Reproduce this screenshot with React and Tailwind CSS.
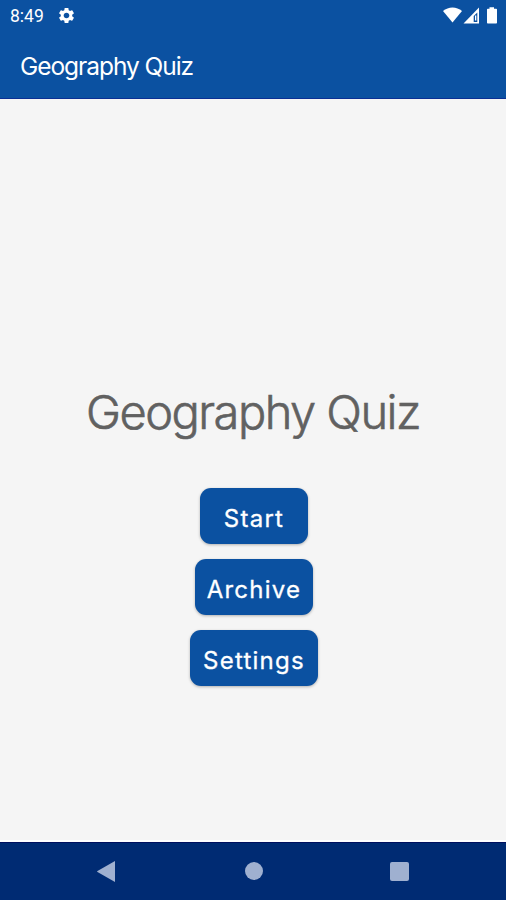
const menuItems = [
  { label: 'Start', width: 'w-[108px]' },
  { label: 'Archive', width: 'w-[118px]' },
  { label: 'Settings', width: 'w-[128px]' },
]

function StatusBar() {
  return (
    <div className="flex h-8 items-center justify-between pl-[10px] pr-[8px] text-white">
      <div className="flex items-center gap-[13px]">
        <span className="pt-[2px] font-['Roboto',sans-serif] text-[17.5px] leading-none">8:49</span>
        <svg className="-mt-px h-[19px] w-[19px]" viewBox="0 0 24 24" fill="currentColor">
          <path d="M19.14 12.94c.04-.3.06-.61.06-.94 0-.32-.02-.64-.07-.94l2.03-1.58c.18-.14.23-.41.12-.61l-1.92-3.32c-.12-.22-.37-.29-.59-.22l-2.39.96c-.5-.38-1.03-.7-1.62-.94l-.36-2.54c-.04-.24-.24-.41-.48-.41h-3.84c-.24 0-.43.17-.47.41l-.36 2.54c-.59.24-1.13.57-1.62.94l-2.39-.96c-.22-.08-.47 0-.59.22L2.74 8.87c-.12.21-.08.47.12.61l2.03 1.58c-.05.3-.09.63-.09.94s.02.64.07.94l-2.03 1.58c-.18.14-.23.41-.12.61l1.92 3.32c.12.22.37.29.59.22l2.39-.96c.5.38 1.03.7 1.62.94l.36 2.54c.05.24.24.41.48.41h3.84c.24 0 .44-.17.47-.41l.36-2.54c.59-.24 1.13-.56 1.62-.94l2.39.96c.22.08.47 0 .59-.22l1.92-3.32c.12-.22.07-.47-.12-.61l-2.01-1.58zM12 15.6c-1.98 0-3.6-1.62-3.6-3.6s1.62-3.6 3.6-3.6 3.6 1.62 3.6 3.6-1.62 3.6-3.6 3.6z" />
        </svg>
      </div>
      {/* Wifi, signal and battery */}
      <svg className="-mt-[2px] h-[17px] w-[55px]" viewBox="0 0 55 17" fill="currentColor">
        <path d="M0 4C5.4-.8 13.6-.8 19 4L9.500 15.500Z" />
        <path d="M36 .5v16H20.500Z" />
        <path d="M34.300 5.500v9.500h-3.600V9Z" fill="#0b51a1" />
        <path d="M32 8.500h1.300v5H32Z" />
        <path d="M46.500 .3h4.500v1.500h2.200q.8 0 .8.800V15.700q0 .8-.8.800h-8.400q-.8 0-.8-.8V2.600q0-.8.800-.8h1.700Z" />
      </svg>
    </div>
  )
}

function NavigationBar() {
  return (
    <nav className="flex h-[58px] items-center justify-between border-t border-[#00105f] bg-[#002b73] px-[97px] pb-px text-[#9fb0d0]">
      <button aria-label="Back">
        <svg className="h-[21px] w-[18px]" viewBox="0 0 18 21" fill="currentColor">
          <path d="M18 0v21L.5 11.100q-.9-.6 0-1.200Z" />
        </svg>
      </button>
      <button aria-label="Home" className="ml-[2px] h-[18px] w-[18px] rounded-full bg-current" />
      <button aria-label="Recent apps" className="h-[19px] w-[19px] rounded-[2px] bg-current" />
    </nav>
  )
}

export default function App() {
  return (
    <div className="flex h-[900px] w-[506px] flex-col overflow-hidden bg-[#f5f5f5] font-['Inter',sans-serif]">
      <header className="h-[99px] border-b border-[#0b2f94] bg-[#0b51a1]">
        <StatusBar />
        <h1 className="pl-5 pt-[16px] text-[24.5px] leading-9 tracking-[-1.05px] text-white">Geography Quiz</h1>
      </header>

      <main className="flex flex-1 flex-col items-center border-b-2 border-white pt-[283px]">
        <h2 className="whitespace-nowrap text-[47px] font-light leading-[60px] tracking-[-1.55px] text-[#616161] [-webkit-text-stroke:0.6px_#616161]">
          Geography Quiz
        </h2>
        <div className="mt-[46px] flex flex-col items-center gap-[15px] pl-px">
          {menuItems.map((item) => (
            <button
              key={item.label}
              className={`${item.width} h-[56px] rounded-[11px] bg-[#0b51a1] pl-px pt-[5px] text-center text-[24px] leading-none tracking-[1.25px] text-white shadow-[0_1px_3px_rgba(0,0,0,0.28)] [-webkit-text-stroke:0.3px_white]`}
            >
              {item.label}
            </button>
          ))}
        </div>
      </main>

      <NavigationBar />
    </div>
  )
}
